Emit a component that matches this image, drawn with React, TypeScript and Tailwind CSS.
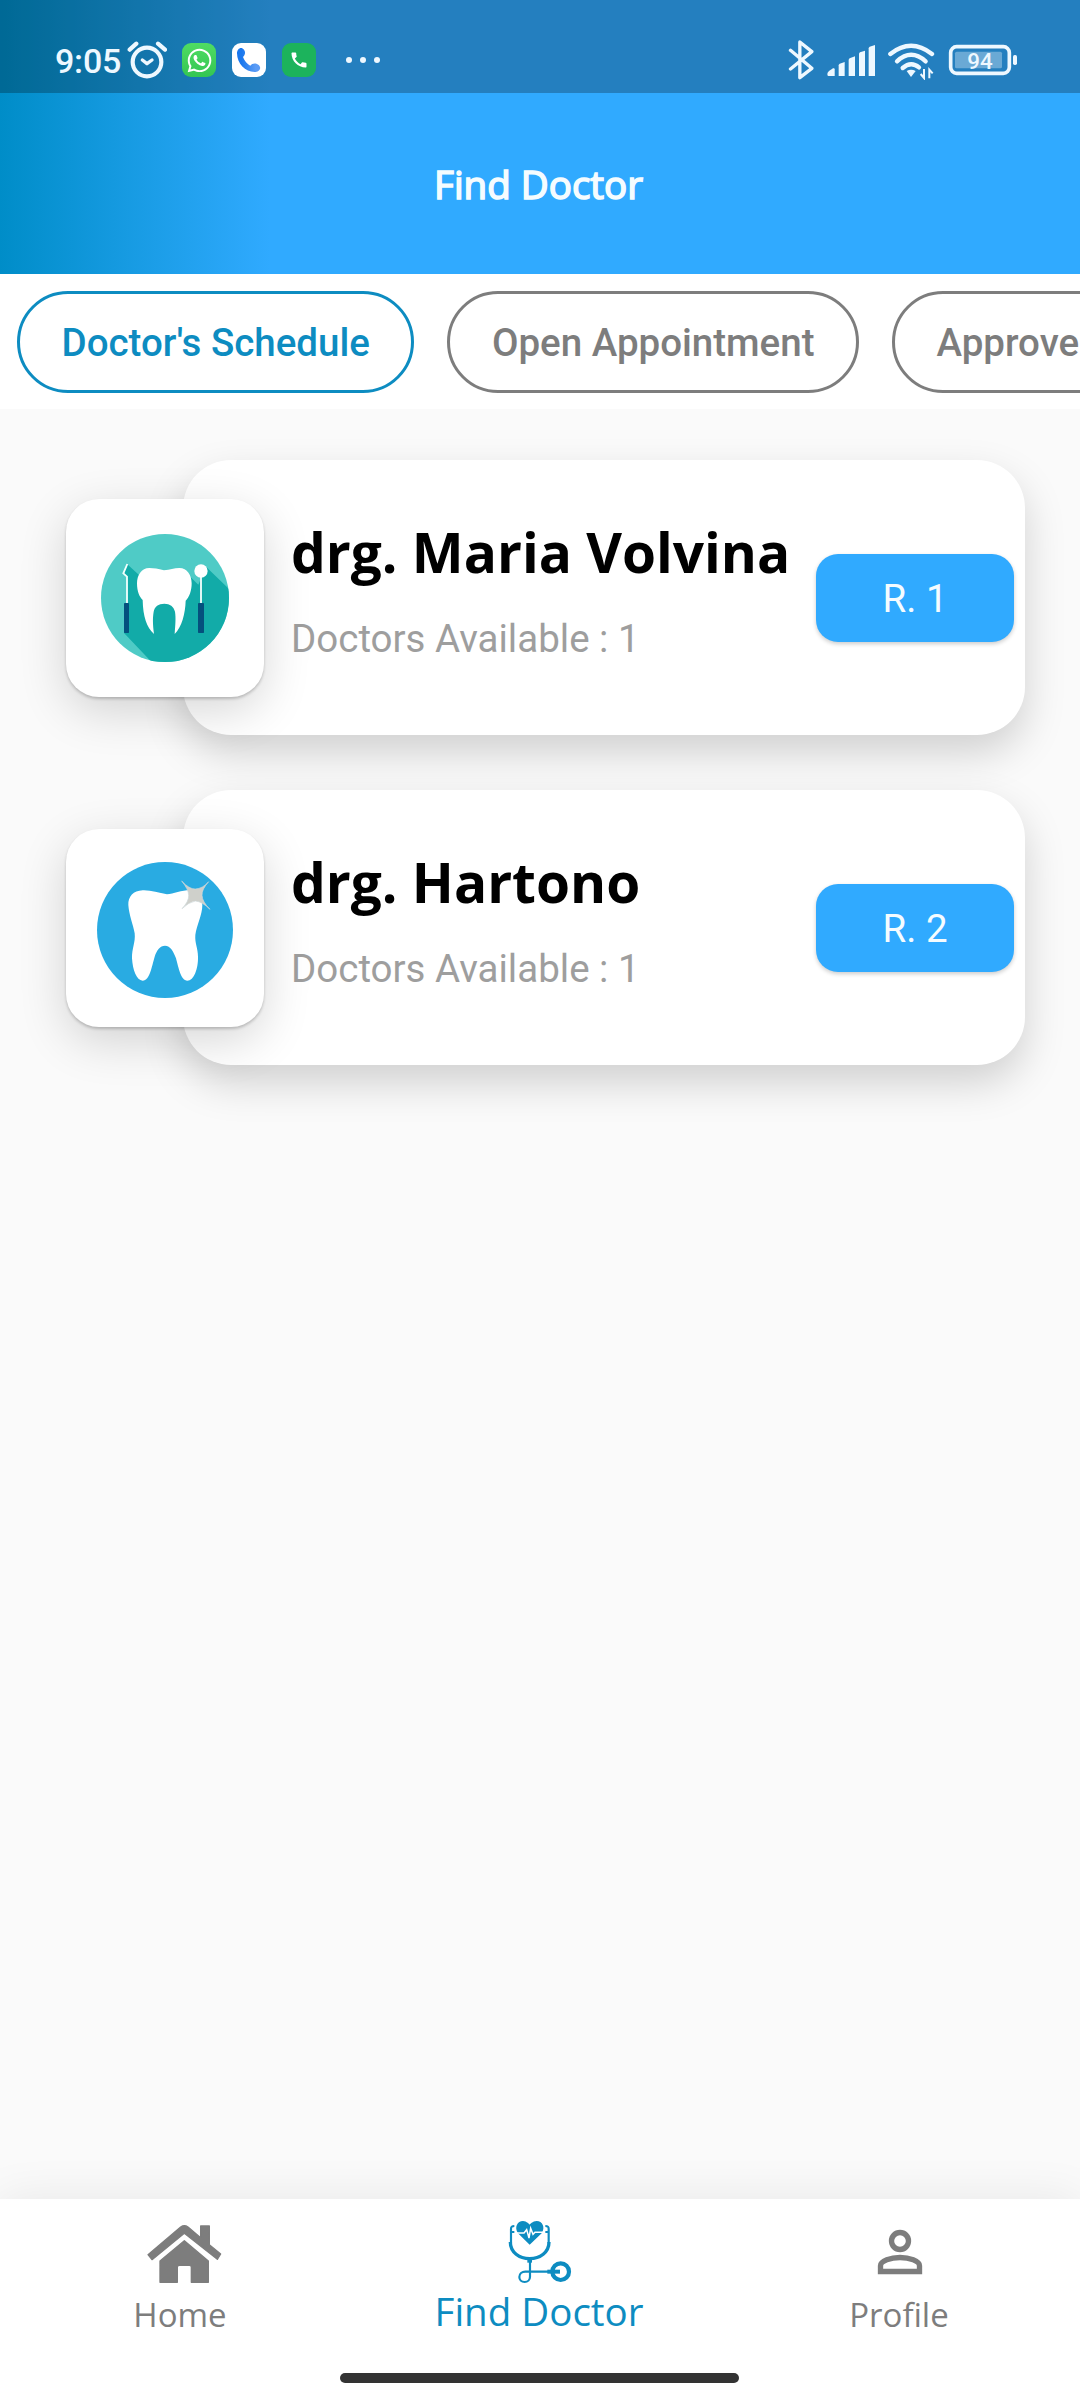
import React, { useState } from 'react';
import { FaWhatsapp } from 'react-icons/fa';
import { MdCall } from 'react-icons/md';

const tabs = ["Doctor's Schedule", 'Open Appointment', 'Approved'];

const doctors = [
  { name: 'drg. Maria Volvina', available: 1, room: 'R. 1', Icon: ToothTools },
  { name: 'drg. Hartono', available: 1, room: 'R. 2', Icon: ToothSparkle },
];

function ToothTools() {
  return (
    <svg viewBox="-42 -33 594 594" className="h-full w-full">
      <clipPath id="disc">
        <circle cx="255" cy="264" r="192" />
      </clipPath>
      <g clipPath="url(#disc)">
        <rect x="60" y="70" width="390" height="390" fill="#4fcbc6" />
        <path d="M142 163L177 195L320 190L355 224L378 170L460 250V470H228L132 369L140 280V200L132 190Z" fill="#12aba8" />
      </g>
      <path
        d="M252 181C234 176 222 174 208 174C184 174 171 196 171 220C171 245 179 262 188 270C189 320 200 352 222 372C218 340 218 322 221 305C224 289 235 281 253 281C270 281 281 289 285 305C288 325 286 345 284 372C305 352 316 310 317 272C328 262 335 242 335 220C335 196 322 174 298 174C282 174 270 180 252 181Z"
        fill="#fff"
      />
      <path d="M141 280V200L130 190L142 162" fill="none" stroke="#f2fffd" strokeWidth="5.5" />
      <path d="M363 280V190" stroke="#f2fffd" strokeWidth="5.5" />
      <circle cx="363" cy="183" r="20" fill="#fff" />
      <rect x="132" y="279" width="15" height="90" rx="2" fill="#04507d" />
      <rect x="354" y="279" width="18" height="90" rx="2" fill="#04507d" />
    </svg>
  );
}

function ToothSparkle() {
  return (
    <svg viewBox="78 177 594 594" className="h-full w-full">
      <circle cx="375" cy="480" r="204" fill="#29abe2" />
      <path
        d="M381 373C355 368 332 360 308 361C280 362 264 380 265 405C267 435 279 462 284 490C287 518 275 535 276 565C278 600 290 632 308 632C330 630 335 590 344 560C351 540 360 527 375 527C391 527 401 545 408 565C416 595 423 632 442 632C462 632 475 595 474 560C474 535 464 520 466 495C470 465 487 435 487 405C487 380 470 361 450 360C425 361 400 371 381 373Z"
        fill="#fff"
      />
      <path
        d="M425 333Q448 358 466 357Q488 356 506 335Q485 358 486 376Q487 396 510 418Q487 395 466 393Q447 396 426 416Q447 394 446 376Q446 358 425 333Z"
        fill="#cfd0cb"
        stroke="#cfd9db"
        strokeWidth="2"
      />
    </svg>
  );
}

function HomeIcon() {
  return (
    <svg viewBox="114 120 252 210" className="h-[70px] w-[84px]" fill="currentColor" stroke="currentColor" strokeWidth="4" strokeLinejoin="round">
      <path d="M144 224L242 141Q253 133 264 141L302 173V138H328V194L362 222L352 238L253 160L156 239Z" />
      <path d="M180 243L253 182L325 243V307H274V262Q274 256 268 256H239Q232 256 232 262V307H180Z" />
    </svg>
  );
}

function StethoscopeIcon() {
  return (
    <svg viewBox="75 120 210 210" className="h-[70px] w-[70px]" fill="none" stroke="currentColor">
      <path
        d="M149 194L114 160C102 142 112 123 129 123C140 123 149 134 149 134C149 134 158 123 170 123C187 123 197 142 185 160Z"
        fill="currentColor"
        stroke="none"
      />
      <path d="M104 159H132L140 149L147 174L152 145L159 163L165 157H196" stroke="#fff" strokeWidth="4.5" />
      <path d="M103 138C94 138 93 140 93 147V190M93 156H103M196 138C205 138 206 140 206 147V190M206 156H196" strokeWidth="6.5" />
      <path d="M91 186C91 217 118 236 149 236C180 236 207 217 207 186" strokeWidth="10" />
      <path d="M149 238V248" strokeWidth="14" />
      <path d="M150 245V290C150 300 143 306 134 306C124 306 118 299 118 291C118 281 126 275 136 275H210" strokeWidth="6.5" />
      <path d="M202 275H240" strokeWidth="12" />
      <circle cx="242" cy="275" r="25" strokeWidth="12.5" />
    </svg>
  );
}

function ProfileIcon() {
  return (
    <svg viewBox="1155 120 210 210" className="h-[70px] w-[70px]" fill="none" stroke="currentColor" strokeWidth="16">
      <circle cx="1260" cy="183" r="25.500" />
      <path d="M1201.500 274.500V257C1201.500 243 1232 232.500 1260 232.500C1288 232.500 1318.500 243 1318.500 257V274.500Z" />
    </svg>
  );
}

function StatusBar() {
  return (
    <div className="flex h-[93px] items-start justify-between bg-black/25 pt-10 pr-[62px] pl-[55px] text-[#eef8ff]">
      <div className="flex h-10 items-center">
        <span className="w-[72px] pt-0.5 text-[34px] leading-10 font-medium tracking-[-0.2px]">9:05</span>
        <svg viewBox="382 120 120 120" className="h-10 w-10" fill="none" stroke="currentColor" strokeLinecap="round">
          <circle cx="442" cy="186" r="43" strokeWidth="12.5" />
          <path d="M390 149L410 131M475 131L496 149" strokeWidth="12.5" />
          <path d="M428 180L442 191L457 180" strokeWidth="10" strokeLinejoin="round" />
        </svg>
        <div className="ml-[15px] flex h-[34px] w-[34px] items-center justify-center rounded-[9px] bg-gradient-to-b from-[#4fdc62] to-[#33c653]">
          <FaWhatsapp className="h-[27px] w-[27px] text-white" />
        </div>
        <svg viewBox="696 129 102 102" className="ml-4 h-[34px] w-[34px] rounded-[9px] bg-white">
          <linearGradient id="handset">
            <stop offset="0.2" stopColor="#1a78ee" />
            <stop offset="0.8" stopColor="#5a9bf5" />
          </linearGradient>
          <path
            d="M711 160C711 146 724 138 732 149C739 159 733 167 729 171C733 183 742 192 751 197C757 190 768 188 777 196C785 205 779 214 767 216C738 218 711 192 711 160Z"
            fill="url(#handset)"
          />
        </svg>
        <div className="ml-4 flex h-[34px] w-[34px] items-center justify-center rounded-[9px] bg-[#1cb35c]">
          <MdCall className="h-5 w-5 text-white" />
        </div>
        <div className="ml-[30px] flex gap-2">
          <i className="h-1.5 w-1.5 rounded-full bg-current" />
          <i className="h-1.5 w-1.5 rounded-full bg-current" />
          <i className="h-1.5 w-1.5 rounded-full bg-current" />
        </div>
      </div>

      <div className="flex h-10 items-center">
        <svg viewBox="144 120 80 120" className="h-10 w-[27px]" fill="none" stroke="currentColor" strokeWidth="10" strokeLinecap="round" strokeLinejoin="round">
          <path d="M151 151L215 205L179 233V126L215 155L151 207" />
        </svg>
        <svg viewBox="258 120 150 120" className="ml-[11px] h-10 w-[50px]" fill="currentColor">
          <path d="M262 222Q262 217 267 213L279 205Q284 203 284 208V228H265Q262 228 262 222Z" />
          <path d="M296 196Q296 193 299 191L314 186V228H296Z" />
          <path d="M326 180Q326 177 329 175L345 169V228H326Z" />
          <path d="M357 162Q357 159 360 157L375 152V228H357Z" />
          <path d="M386 145Q386 142 389 140L405 135V228H386Z" />
        </svg>
        <svg viewBox="440 120 150 120" className="ml-[11px] h-10 w-[50px]" fill="none" stroke="currentColor" strokeWidth="13" strokeLinecap="round">
          <path d="M450 162Q512 113 575 162" />
          <path d="M470 184Q512 145 556 184" />
          <path d="M487 204Q512 182 536 202" />
          <path d="M499 213Q512 206 526 213L512 231Z" fill="currentColor" stroke="none" />
          <path d="M551 207V234L541 222M567 235V209L577 220" strokeWidth="6" strokeLinecap="butt" />
        </svg>
        <svg viewBox="624 120 210 120" className="ml-[11px] h-10 w-[70px]">
          <rect x="632" y="140" width="176" height="80" rx="18" fill="none" stroke="currentColor" strokeWidth="11" />
          <rect x="645" y="155" width="141" height="50" rx="5" fill="currentColor" opacity="0.35" />
          <rect x="819" y="165" width="12" height="30" rx="5" fill="currentColor" />
          <text x="720" y="206" textAnchor="middle" fontSize="67" fontWeight="500" fill="currentColor">94</text>
        </svg>
      </div>
    </div>
  );
}

export default function App() {
  const [activeTab, setActiveTab] = useState(0);

  return (
    <div className="flex h-[2400px] w-[1080px] flex-col overflow-hidden bg-[#fafafa] font-['Roboto',sans-serif]">
      {/* Header */}
      <header className="bg-[linear-gradient(90deg,#008dc8,#30aaff_270px)]">
        <StatusBar />
        <div className="flex h-[181px] items-center justify-center pt-0.5 pr-[3px]">
          <h1 className="font-['Open_Sans',sans-serif] text-[38.5px] text-[#f5fcff] [-webkit-text-stroke:1.6px_#f5fcff]">Find Doctor</h1>
        </div>
      </header>

      {/* Tabs */}
      <div className="flex h-[135px] gap-[33px] overflow-hidden bg-white pt-[17px] pl-[17px]">
        {tabs.map((tab, i) => (
          <button
            key={tab}
            onClick={() => setActiveTab(i)}
            className={`h-[102px] shrink-0 rounded-full border-[3px] px-[41.5px] pt-px text-[38.5px] font-medium whitespace-nowrap ${
              i === activeTab ? 'border-[#0d8cc1] text-[#0d8cc1]' : 'border-[#7d7d7d] text-[#7d7d7d]'
            }`}
          >
            {tab}
          </button>
        ))}
      </div>

      {/* Doctor list */}
      <main className="flex flex-1 flex-col gap-[55px] pt-[51px] pr-[55px] pl-[66px]">
        {doctors.map(({ name, available, room, Icon }) => (
          <div key={name} className="flex h-[275px] items-center">
            <div className="z-10 h-[198px] w-[198px] shrink-0 rounded-[33px] bg-white shadow-[0_2px_3px_rgba(0,0,0,0.2),0_14px_48px_rgba(0,0,0,0.16)]">
              <Icon />
            </div>
            <div className="-ml-[81px] flex h-full flex-1 items-center justify-between rounded-[48px] bg-white pr-[11px] pl-[108px] shadow-[0_18px_40px_rgba(0,0,0,0.17)]">
              <div className="self-start pt-[54px] whitespace-nowrap">
                <h2 className="font-['Open_Sans',sans-serif] text-[55px] leading-[76px] font-bold text-black">{name}</h2>
                <p className="mt-[26px] text-[38.5px] leading-[46px] text-[#9e9e9e]">Doctors Available : {available}</p>
              </div>
              <button className="h-[88px] w-[198px] shrink-0 rounded-[22px] bg-[#30aaff] pt-0.5 text-[38.5px] text-[#f5fcff] shadow-[0_2px_4px_rgba(0,0,0,0.2)]">
                {room}
              </button>
            </div>
          </div>
        ))}
      </main>

      {/* Bottom navigation */}
      <nav className="flex h-[201px] flex-col items-center justify-between bg-white pt-[21px] pb-[17px] font-['Open_Sans',sans-serif] text-[33px] leading-[50px] text-[#7d7d7d] shadow-[0_0_44px_rgba(0,0,0,0.08)]">
        <div className="flex w-full">
          <div className="flex flex-1 flex-col items-center">
            <HomeIcon />
            <span>Home</span>
          </div>
          <div className="flex flex-1 flex-col items-center text-[#0d8cc1]">
            <StethoscopeIcon />
            <span className="pr-0.5 text-[38.5px] leading-[43px]">Find Doctor</span>
          </div>
          <div className="flex flex-1 flex-col items-center">
            <ProfileIcon />
            <span className="pr-0.5">Profile</span>
          </div>
        </div>
        <div className="mr-0.5 h-2.5 w-[399px] rounded-full bg-[#333]" />
      </nav>
    </div>
  );
}
